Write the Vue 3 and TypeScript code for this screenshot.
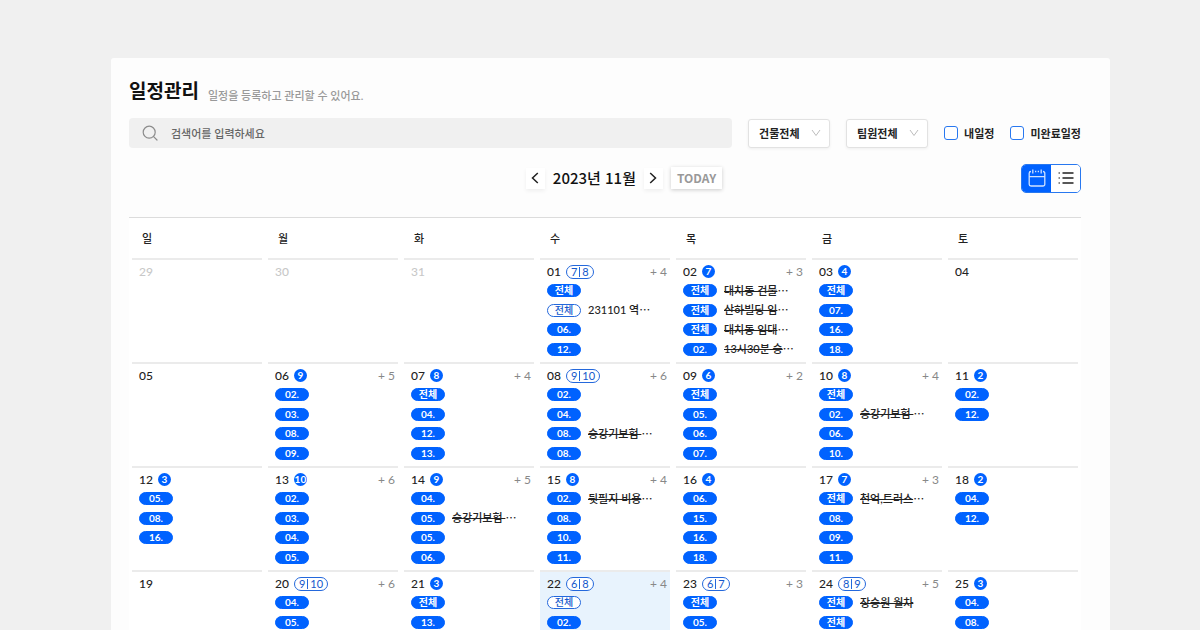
<script setup lang="ts">
import { ref } from 'vue'

interface Entry {
  tag: string
  title?: string
  cut?: boolean
  open?: boolean
}

interface Day {
  date: string
  muted?: boolean
  today?: boolean
  done?: string
  ratio?: [string, string]
  more?: number
  entries: Entry[]
}

const ALL = '전체'
const tags = (...names: string[]): Entry[] => names.map((tag) => ({ tag }))
const struck = (tag: string, title: string, cut = true): Entry => ({ tag, title, cut })

const weekdays = ['일', '월', '화', '수', '목', '금', '토']

const weeks: Day[][] = [
  [
    { date: '29', muted: true, entries: [] },
    { date: '30', muted: true, entries: [] },
    { date: '31', muted: true, entries: [] },
    {
      date: '01',
      ratio: ['7', '8'],
      more: 4,
      entries: [{ tag: ALL }, { tag: ALL, title: '231101 역', cut: true, open: true }, ...tags('06.', '12.')],
    },
    {
      date: '02',
      done: '7',
      more: 3,
      entries: [
        struck(ALL, '대치동 건물'),
        struck(ALL, '산하빌딩 임'),
        struck(ALL, '대치동 임대'),
        struck('02.', '13시30분 승'),
      ],
    },
    { date: '03', done: '4', entries: tags(ALL, '07.', '16.', '18.') },
    { date: '04', entries: [] },
  ],
  [
    { date: '05', entries: [] },
    { date: '06', done: '9', more: 5, entries: tags('02.', '03.', '08.', '09.') },
    { date: '07', done: '8', more: 4, entries: tags(ALL, '04.', '12.', '13.') },
    {
      date: '08',
      ratio: ['9', '10'],
      more: 6,
      entries: [...tags('02.', '04.'), struck('08.', '승강기보험 '), { tag: '08.' }],
    },
    { date: '09', done: '6', more: 2, entries: tags(ALL, '05.', '06.', '07.') },
    {
      date: '10',
      done: '8',
      more: 4,
      entries: [{ tag: ALL }, struck('02.', '승강기보험 '), ...tags('06.', '10.')],
    },
    { date: '11', done: '2', entries: tags('02.', '12.') },
  ],
  [
    { date: '12', done: '3', entries: tags('05.', '08.', '16.') },
    { date: '13', done: '10', more: 6, entries: tags('02.', '03.', '04.', '05.') },
    {
      date: '14',
      done: '9',
      more: 5,
      entries: [{ tag: '04.' }, struck('05.', '승강기보험 '), ...tags('05.', '06.')],
    },
    {
      date: '15',
      done: '8',
      more: 4,
      entries: [struck('02.', '뒷필지 비용'), ...tags('08.', '10.', '11.')],
    },
    { date: '16', done: '4', entries: tags('06.', '15.', '16.', '18.') },
    {
      date: '17',
      done: '7',
      more: 3,
      entries: [struck(ALL, '천억,트러스'), ...tags('08.', '09.', '11.')],
    },
    { date: '18', done: '2', entries: tags('04.', '12.') },
  ],
  [
    { date: '19', entries: [] },
    { date: '20', ratio: ['9', '10'], more: 6, entries: tags('04.', '05.') },
    { date: '21', done: '3', entries: tags(ALL, '13.') },
    {
      date: '22',
      today: true,
      ratio: ['6', '8'],
      more: 4,
      entries: [{ tag: ALL, open: true }, { tag: '02.' }],
    },
    { date: '23', ratio: ['6', '7'], more: 3, entries: tags(ALL, '05.') },
    {
      date: '24',
      ratio: ['8', '9'],
      more: 5,
      entries: [struck(ALL, '장승원 월차', false), { tag: ALL }],
    },
    { date: '25', done: '3', entries: tags('04.', '08.') },
  ],
]

const keyword = ref('')
const building = ref('건물전체')
const member = ref('팀원전체')
const mine = ref(false)
const unfinished = ref(false)
</script>

<template>
  <div class="page" lang="ko">
    <main class="card">
      <header class="heading">
        <h1>일정관리</h1>
        <p>일정을 등록하고 관리할 수 있어요.</p>
      </header>

      <div class="filters">
        <label class="search">
          <svg width="16" height="16" viewBox="0 0 16 16" fill="none" stroke="#8c8c8c" stroke-width="1.2">
            <circle cx="7.2" cy="7.2" r="6" />
            <path d="M11.6 11.6 15 15" stroke-linecap="round" />
          </svg>
          <input v-model="keyword" type="text" placeholder="검색어를 입력하세요" aria-label="검색어" />
        </label>
        <label class="picker">
          <select v-model="building" aria-label="건물">
            <option>건물전체</option>
          </select>
          <svg width="10" height="8" viewBox="0 0 10 8" fill="none" stroke="#bdbdbd"><path d="M1 1l4 5.500L9 1" /></svg>
        </label>
        <label class="picker">
          <select v-model="member" aria-label="팀원">
            <option>팀원전체</option>
          </select>
          <svg width="10" height="8" viewBox="0 0 10 8" fill="none" stroke="#bdbdbd"><path d="M1 1l4 5.500L9 1" /></svg>
        </label>
        <label class="check"><input v-model="mine" type="checkbox" />내일정</label>
        <label class="check"><input v-model="unfinished" type="checkbox" />미완료일정</label>
      </div>

      <div class="toolbar">
        <div class="month">
          <button class="arrow" type="button" aria-label="이전 달">
            <svg width="8" height="12" viewBox="0 0 8 12" fill="none" stroke="#222" stroke-width="1.5"><path d="M6.800 1 1.500 6l5.300 5" /></svg>
          </button>
          <h2>2023년 11월</h2>
          <button class="arrow" type="button" aria-label="다음 달">
            <svg width="8" height="12" viewBox="0 0 8 12" fill="none" stroke="#222" stroke-width="1.5"><path d="M1.200 1l5.300 5-5.300 5" /></svg>
          </button>
          <button class="today-button" type="button">TODAY</button>
        </div>
        <div class="views">
          <button class="view active" type="button" aria-label="달력 보기">
            <svg width="18" height="18" viewBox="0 0 18 18" fill="none" stroke="#cfe2ff" stroke-width="1.300">
              <path d="M3 2.500a1.800 1.800 0 0 0-1.800 1.800v10.900A1.800 1.800 0 0 0 3 17h12a1.800 1.800 0 0 0 1.800-1.800V4.300A1.800 1.800 0 0 0 15 2.500M1.200 7.700h15.600M4.800.500v4M13.200.500v4M7 2.500h1.300M9.700 2.500H11" />
            </svg>
          </button>
          <button class="view" type="button" aria-label="목록 보기">
            <svg width="16" height="14" viewBox="0 0 16 14" fill="none" stroke="#222" stroke-width="1.600">
              <path d="M4.500 2h11M4.500 7h11M4.500 12h11" />
              <path d="M.500 2H2M.500 7H2M.500 12H2" stroke="#666" />
            </svg>
          </button>
        </div>
      </div>

      <table class="calendar">
        <thead>
          <tr>
            <th v-for="name in weekdays" :key="name" scope="col">{{ name }}</th>
          </tr>
        </thead>
        <tbody>
          <tr v-for="(week, index) in weeks" :key="index">
            <td v-for="day in week" :key="day.date">
              <div class="day" :class="{ today: day.today, muted: day.muted }">
                <div class="day-head">
                  <span class="date">{{ day.date }}</span>
                  <span v-if="day.done" class="count"><span>{{ day.done }}</span></span>
                  <span v-if="day.ratio" class="ratio">
                    <span>{{ day.ratio[0] }}</span><i></i><span>{{ day.ratio[1] }}</span>
                  </span>
                  <span v-if="day.more" class="more">+ {{ day.more }}</span>
                </div>
                <ul class="entries">
                  <li v-for="(entry, n) in day.entries" :key="n">
                    <span class="tag" :class="{ open: entry.open }">{{ entry.tag }}</span>
                    <span v-if="entry.title" class="title">
                      <span v-if="entry.open">{{ entry.title }}</span><s v-else>{{ entry.title }}</s><span v-if="entry.cut">⋯</span>
                    </span>
                  </li>
                </ul>
              </div>
            </td>
          </tr>
        </tbody>
      </table>
    </main>
  </div>
</template>

<style>
html,
body {
  height: 100%;
  overflow: hidden;
  background: #f0f0f0;
}
</style>

<style scoped>
.page {
  padding: 58px 90px 0 111px;
  font-family: Lato, 'Noto Sans CJK KR', sans-serif;
  font-size: 11px;
  color: #222;
}
.card {
  padding: 19px 29px 0 18px;
  border-radius: 3px 3px 0 0;
  background: #fdfdfd;
}
h1,
h2,
p,
ul {
  margin: 0;
  padding: 0;
}
button,
input,
select {
  font: inherit;
  color: inherit;
}
.heading {
  display: flex;
  align-items: flex-start;
  gap: 9px;
  height: 41px;
}
h1 {
  font-size: 19px;
  line-height: 28px;
  font-weight: 700;
  color: #111;
}
.heading p {
  padding-top: 9px;
  line-height: 20px;
  font-weight: 500;
  color: #999;
}
.filters {
  display: flex;
  align-items: center;
  gap: 16px;
}
.search {
  flex: 1;
  display: flex;
  align-items: center;
  gap: 13px;
  height: 30px;
  padding: 0 13px;
  border-radius: 4px;
  background: #f0f0f0;
}
.search input {
  flex: 1;
  min-width: 0;
  padding: 0;
  border: 0;
  outline: 0;
  background: transparent;
  font-weight: 500;
}
.search input::placeholder {
  color: #666;
  opacity: 1;
}
.picker {
  display: flex;
  align-items: center;
  position: relative;
}
.picker select {
  width: 82px;
  height: 29px;
  padding: 0 0 0 10px;
  appearance: none;
  border: 1px solid #e2e2e2;
  border-radius: 3px;
  background: #fff;
  box-shadow: 0 1px 3px rgba(0, 0, 0, 0.06);
  font-weight: 700;
}
.picker svg {
  position: absolute;
  right: 9px;
  pointer-events: none;
}
.check {
  display: flex;
  align-items: center;
  gap: 6px;
  font-weight: 700;
  white-space: nowrap;
}
.check input {
  width: 14px;
  height: 14px;
  margin: 0;
  appearance: none;
  border: 1px solid #2878f0;
  border-radius: 3px;
  background: #fff;
}
.check input:checked {
  background: #0062ff;
}
.toolbar {
  display: grid;
  grid-template-columns: 1fr auto 1fr;
  align-items: center;
  height: 69px;
}
.month {
  grid-column: 2;
  display: flex;
  align-items: center;
  gap: 8px;
  margin-left: 38px;
  margin-bottom: 9px;
}
.month h2 {
  font-family: 'Noto Sans CJK KR', sans-serif;
  font-size: 15px;
  line-height: 24px;
  font-weight: 500;
  color: #111;
}
.arrow {
  display: flex;
  align-items: center;
  justify-content: center;
  width: 19px;
  height: 21px;
  padding: 0;
  border: 0;
  background: #fff;
  box-shadow: 0 2px 4px rgba(0, 0, 0, 0.06);
}
.today-button {
  height: 22px;
  padding: 0 6px;
  border: 0;
  background: #fff;
  box-shadow: 0 1px 4px rgba(0, 0, 0, 0.2);
  font-family: 'Noto Sans CJK KR', sans-serif;
  font-size: 12px;
  line-height: 22px;
  font-weight: 700;
  color: #999;
}
.views {
  justify-self: end;
  display: flex;
  margin-bottom: 9px;
  border: 1px solid #2878f0;
  border-radius: 5px;
  overflow: hidden;
}
.view {
  display: flex;
  align-items: center;
  justify-content: center;
  width: 29px;
  height: 27px;
  padding: 0;
  border: 0;
  background: #fff;
}
.view.active {
  background: #0062ff;
}
.calendar {
  width: 100%;
  table-layout: fixed;
  border-collapse: separate;
  border-spacing: 0;
  border-top: 1px solid #dcdcdc;
  background: #fff;
}
.calendar th {
  height: 40px;
  padding: 0 13px;
  font-weight: 500;
  text-align: left;
}
.calendar td {
  padding: 0 3px;
  vertical-align: top;
}
.day {
  height: 102px;
  border-top: 2px solid #ebebeb;
}
.day.today {
  background: #e8f3fd;
}
.day-head {
  display: flex;
  align-items: center;
  gap: 5px;
  height: 19px;
  padding: 2px 3px 0 7px;
  font-size: 12px;
  line-height: 16px;
}
.date {
  font-weight: 500;
}
.muted .date {
  color: #c8c8c8;
}
.count {
  display: flex;
  align-items: center;
  justify-content: center;
  width: 13px;
  height: 13px;
  border-radius: 50%;
  background: #0062ff;
  color: #fff;
  font-size: 10px;
  line-height: 13px;
  font-weight: 700;
}
.ratio {
  display: flex;
  align-items: center;
  gap: 2px;
  height: 12px;
  padding: 0 4px;
  border: 1px solid #2468dc;
  border-radius: 7px;
  background: #fff;
  color: #1458cc;
  font-size: 11px;
  line-height: 12px;
}
.ratio i {
  width: 1px;
  height: 10px;
  background: #2468dc;
}
.more {
  margin-left: auto;
  color: #888;
}
.entries {
  display: grid;
  grid-template-rows: repeat(4, 1fr);
  height: 78px;
  list-style: none;
}
.entries li {
  display: flex;
  align-items: center;
  gap: 7px;
  padding: 0 0 0 7px;
  min-height: 0;
}
.tag {
  box-sizing: border-box;
  width: 34px;
  height: 13px;
  border: 1px solid #0062ff;
  border-radius: 7px;
  background: #0062ff;
  color: #fff;
  font-size: 10px;
  line-height: 11px;
  font-weight: 700;
  text-align: center;
}
.tag.open {
  border-color: #2468dc;
  background: #fff;
  color: #1458cc;
  font-weight: 500;
}
.title {
  line-height: 16px;
  font-weight: 500;
  white-space: pre;
}
</style>
